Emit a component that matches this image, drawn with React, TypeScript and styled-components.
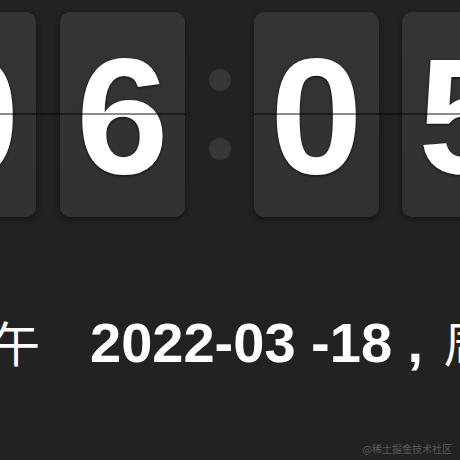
import React from 'react';
import styled, { createGlobalStyle } from 'styled-components';

const GlobalStyle = createGlobalStyle`
  html, body {
    margin: 0;
    padding: 0;
    background-color: #222222;
    overflow: hidden;
  }
`;

const Page = styled.div`
  position: relative;
  width: 460px;
  height: 460px;
  overflow: hidden;
  background-color: #222222;
  font-family: "Liberation Sans", Arial, sans-serif;
`;

const ClockRow = styled.div`
  display: flex;
  align-items: center;
  margin-left: -89px;
  padding-top: 12px;
`;

const Group = styled.div<{ gap: number }>`
  position: relative;
  display: flex;
  gap: ${(p) => p.gap}px;

  &::after {
    content: '';
    position: absolute;
    left: 0;
    right: 0;
    top: 101px;
    height: 2px;
    background: rgba(0, 0, 0, 0.45);
  }
`;

const Card = styled.div`
  width: 125px;
  height: 205px;
  flex-shrink: 0;
  border-radius: 10px;
  background: linear-gradient(#343434, #313131);
  box-shadow: 0 2px 6px rgba(0, 0, 0, 0.45);
  display: flex;
  align-items: center;
  justify-content: center;
  color: #ffffff;
  font-size: 166px;
  font-weight: 700;
  line-height: 1;
  text-shadow: 0 1px 3px rgba(0, 0, 0, 0.7);
  padding-top: 2px;
  box-sizing: border-box;
`;

const Colon = styled.div`
  width: 69px;
  flex-shrink: 0;
  display: flex;
  flex-direction: column;
  align-items: center;
  gap: 47px;
`;

const Dot = styled.div`
  width: 22px;
  height: 22px;
  border-radius: 50%;
  background: #373737;
`;

const DateRow = styled.div`
  display: flex;
  align-items: baseline;
  white-space: nowrap;
  margin-top: 94px;
  margin-left: -56px;
  color: #ffffff;
  line-height: 60px;
`;

const Cjk = styled.span<{ offset?: number }>`
  font-family: "Noto Sans CJK SC", sans-serif;
  font-size: 48px;
  font-weight: 400;
  margin-left: ${(p) => p.offset ?? 0}px;
`;

const DateText = styled.span`
  margin-left: 50px;
  font-size: 56px;
  font-weight: 700;
`;

const Watermark = styled.div`
  position: absolute;
  right: 8px;
  bottom: 4px;
  font-family: "Noto Sans CJK SC", sans-serif;
  font-size: 10px;
  color: #5a5a5a;
`;

const App: React.FC = () => {
  return (
    <Page>
      <GlobalStyle />
      <ClockRow>
        <Group gap={24}>
          <Card>0</Card>
          <Card>6</Card>
        </Group>
        <Colon>
          <Dot />
          <Dot />
        </Colon>
        <Group gap={23}>
          <Card>0</Card>
          <Card>5</Card>
        </Group>
      </ClockRow>
      <DateRow>
        <Cjk>下午</Cjk>
        <DateText>
          2022-03 -18 , <Cjk offset={5}>周五</Cjk>
        </DateText>
      </DateRow>
      <Watermark>@稀土掘金技术社区</Watermark>
    </Page>
  );
};

export default App;
